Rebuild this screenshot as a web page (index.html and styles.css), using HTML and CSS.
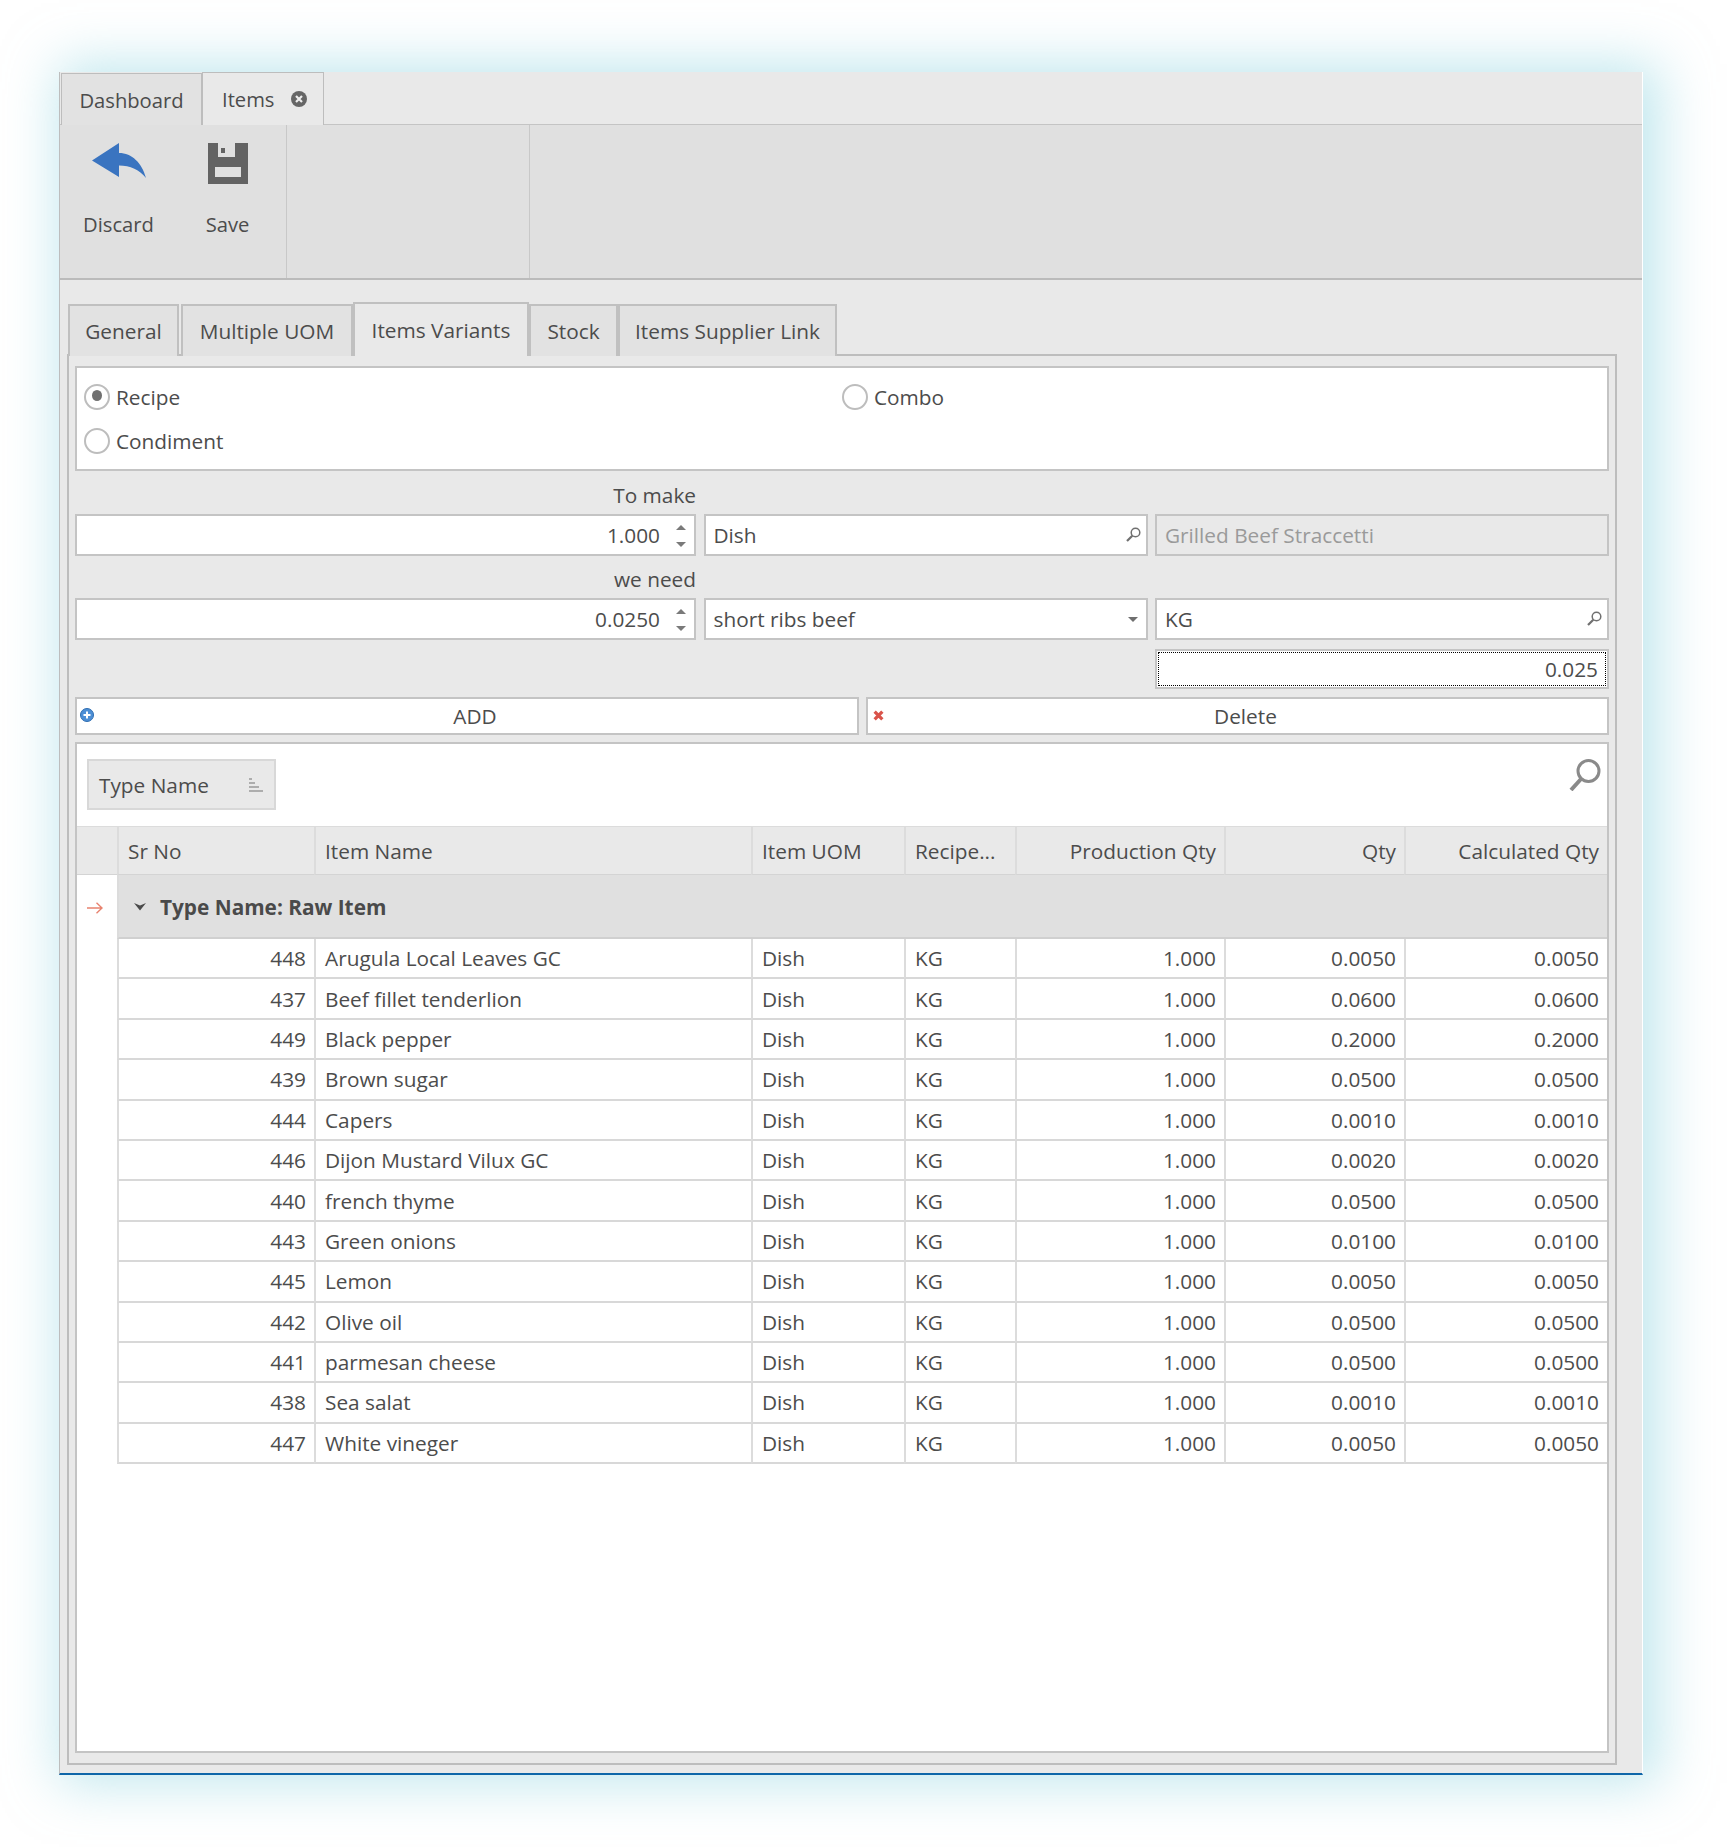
FILE: index.html
```html
<!DOCTYPE html>
<html lang="en">
<head>
<meta charset="utf-8">
<title>Items</title>
<link rel="stylesheet" href="styles.css">
</head>
<body>
<div class="window">
  <div class="doc-tabs">
    <div class="doc-tab">Dashboard</div>
    <div class="doc-tab active">Items
      <svg class="close-icon" viewBox="0 0 16 16"><circle cx="8" cy="8" r="8" fill="#666"/><path d="M5 5l6 6M11 5l-6 6" stroke="#eee" stroke-width="2.2" fill="none"/></svg>
    </div>
  </div>
  <div class="toolbar">
    <div class="tool-group first">
      <div class="tool">
        <svg class="tool-icon" width="54" height="41" viewBox="0 0 54 41"><path d="M0 17.500 27 0V10C40 10 50 20 54 35 48 27 38 22.500 27 22.500V34Z" fill="#3a74c0"/></svg>
        <span>Discard</span>
      </div>
      <div class="tool">
        <svg class="tool-icon" width="40" height="41" viewBox="0 0 40 41"><path fill-rule="evenodd" d="M0 0H40V41H0ZM10 0V14H27V0ZM13 5H17V10H13ZM7 24V34H33V24Z" fill="#636363"/></svg>
        <span>Save</span>
      </div>
    </div>
    <div class="tool-group second"></div>
  </div>
  <div class="content">
    <div class="tabs">
      <div class="tab t1">General</div>
      <div class="tab t2">Multiple UOM</div>
      <div class="tab t3 active">Items Variants</div>
      <div class="tab t4">Stock</div>
      <div class="tab t5">Items Supplier Link</div>
    </div>
    <div class="panel">
      <div class="radio-box">
        <label class="radio"><span class="dot on"></span>Recipe</label>
        <label class="radio"><span class="dot"></span>Combo</label>
        <label class="radio"><span class="dot"></span>Condiment</label>
      </div>
      <div class="form">
        <div class="caption">To make</div>
        <div></div><div></div>
        <div class="field num">1.000<span class="spin"><i class="up"></i><i class="down"></i></span></div>
        <div class="field">Dish
          <svg class="lens" viewBox="0 0 15 15"><circle cx="9.500" cy="5.500" r="4.300" fill="none" stroke="#707070" stroke-width="1.500"/><path d="M6.300 8.700 1 14" stroke="#707070" stroke-width="2.200"/></svg>
        </div>
        <div class="field off">Grilled Beef Straccetti</div>
        <div class="caption">we need</div>
        <div></div><div></div>
        <div class="field num">0.0250<span class="spin"><i class="up"></i><i class="down"></i></span></div>
        <div class="field">short ribs beef<i class="drop"></i></div>
        <div class="field">KG
          <svg class="lens" viewBox="0 0 15 15"><circle cx="9.500" cy="5.500" r="4.300" fill="none" stroke="#707070" stroke-width="1.500"/><path d="M6.300 8.700 1 14" stroke="#707070" stroke-width="2.200"/></svg>
        </div>
      </div>
      <div class="focus-row"><div class="field focus">0.025</div></div>
      <div class="actions">
        <div class="action add">
          <svg class="action-icon plus" viewBox="0 0 14 14"><circle cx="7" cy="7" r="6.500" fill="#4d8fd6" stroke="#2e6db0"/><path d="M7 3.500v7M3.500 7h7" stroke="#fff" stroke-width="2"/></svg>
          ADD
        </div>
        <div class="action del">
          <svg class="action-icon cross" viewBox="0 0 10 10"><path d="M1.500 1.500l7 7M8.500 1.500l-7 7" stroke="#d9534a" stroke-width="3"/></svg>
          Delete
        </div>
      </div>
      <div class="grid-box">
        <div class="group-panel">
          <div class="chip">Type Name
            <svg class="sort" viewBox="0 0 14 14"><path d="M0 1h3M0 5h6M0 9h10M0 13h14" stroke="#999" stroke-width="1.400"/></svg>
          </div>
          <svg class="find" viewBox="0 0 32 32"><circle cx="19.500" cy="12" r="10.500" fill="none" stroke="#8a8a8a" stroke-width="3"/><path d="M12 20 2 31" stroke="#8a8a8a" stroke-width="4"/></svg>
        </div>
        <div class="row head">
          <div class="cell ind"></div>
          <div class="cell">Sr No</div>
          <div class="cell">Item Name</div>
          <div class="cell">Item UOM</div>
          <div class="cell">Recipe...</div>
          <div class="cell r">Production Qty</div>
          <div class="cell r">Qty</div>
          <div class="cell r">Calculated Qty</div>
        </div>
        <div class="group-row">
          <div class="group-ind"><svg class="current" viewBox="0 0 16 12"><path d="M0 6H15M9.500 .8 15 6 9.500 11.200" fill="none" stroke="#e8836f" stroke-width="1.400"/></svg></div>
          <div class="group-title"><svg class="chev" viewBox="0 0 12 8"><path d="M0 0 6 2.500 12 0 6 7.500Z" fill="#4a4a4a"/></svg>Type Name: Raw Item</div>
        </div>
        <div class="row"><div class="ind"></div><div class="cell r">448</div><div class="cell">Arugula Local Leaves GC</div><div class="cell">Dish</div><div class="cell">KG</div><div class="cell r">1.000</div><div class="cell r">0.0050</div><div class="cell r">0.0050</div></div>
        <div class="row"><div class="ind"></div><div class="cell r">437</div><div class="cell">Beef fillet tenderlion</div><div class="cell">Dish</div><div class="cell">KG</div><div class="cell r">1.000</div><div class="cell r">0.0600</div><div class="cell r">0.0600</div></div>
        <div class="row"><div class="ind"></div><div class="cell r">449</div><div class="cell">Black pepper</div><div class="cell">Dish</div><div class="cell">KG</div><div class="cell r">1.000</div><div class="cell r">0.2000</div><div class="cell r">0.2000</div></div>
        <div class="row"><div class="ind"></div><div class="cell r">439</div><div class="cell">Brown sugar</div><div class="cell">Dish</div><div class="cell">KG</div><div class="cell r">1.000</div><div class="cell r">0.0500</div><div class="cell r">0.0500</div></div>
        <div class="row"><div class="ind"></div><div class="cell r">444</div><div class="cell">Capers</div><div class="cell">Dish</div><div class="cell">KG</div><div class="cell r">1.000</div><div class="cell r">0.0010</div><div class="cell r">0.0010</div></div>
        <div class="row"><div class="ind"></div><div class="cell r">446</div><div class="cell">Dijon Mustard Vilux GC</div><div class="cell">Dish</div><div class="cell">KG</div><div class="cell r">1.000</div><div class="cell r">0.0020</div><div class="cell r">0.0020</div></div>
        <div class="row"><div class="ind"></div><div class="cell r">440</div><div class="cell">french thyme</div><div class="cell">Dish</div><div class="cell">KG</div><div class="cell r">1.000</div><div class="cell r">0.0500</div><div class="cell r">0.0500</div></div>
        <div class="row"><div class="ind"></div><div class="cell r">443</div><div class="cell">Green onions</div><div class="cell">Dish</div><div class="cell">KG</div><div class="cell r">1.000</div><div class="cell r">0.0100</div><div class="cell r">0.0100</div></div>
        <div class="row"><div class="ind"></div><div class="cell r">445</div><div class="cell">Lemon</div><div class="cell">Dish</div><div class="cell">KG</div><div class="cell r">1.000</div><div class="cell r">0.0050</div><div class="cell r">0.0050</div></div>
        <div class="row"><div class="ind"></div><div class="cell r">442</div><div class="cell">Olive oil</div><div class="cell">Dish</div><div class="cell">KG</div><div class="cell r">1.000</div><div class="cell r">0.0500</div><div class="cell r">0.0500</div></div>
        <div class="row"><div class="ind"></div><div class="cell r">441</div><div class="cell">parmesan cheese</div><div class="cell">Dish</div><div class="cell">KG</div><div class="cell r">1.000</div><div class="cell r">0.0500</div><div class="cell r">0.0500</div></div>
        <div class="row"><div class="ind"></div><div class="cell r">438</div><div class="cell">Sea salat</div><div class="cell">Dish</div><div class="cell">KG</div><div class="cell r">1.000</div><div class="cell r">0.0010</div><div class="cell r">0.0010</div></div>
        <div class="row"><div class="ind"></div><div class="cell r">447</div><div class="cell">White vineger</div><div class="cell">Dish</div><div class="cell">KG</div><div class="cell r">1.000</div><div class="cell r">0.0050</div><div class="cell r">0.0050</div></div>
      </div>
    </div>
  </div>
</div>
</body>
</html>
```
FILE: styles.css
```css
* { box-sizing: border-box; }
html, body { margin: 0; background: #fff; }
body {
  height: 1847px;
  padding: 72px 0 0 59px;
  font-family: "Open Sans", "Noto Sans", sans-serif;
  font-size: 20.800px;
  color: #4c4c4c;
  overflow: hidden;
}
.window {
  width: 1584px;
  height: 1703px;
  background: #e9e9e9;
  border-left: 1px solid #bdbdbd;
  border-right: 1px solid #fff;
  border-bottom: 2px solid #0f66a8;
  box-shadow: 8px 0 50px 8px rgba(130, 208, 222, .5);
  display: flex;
  flex-direction: column;
}

/* document tabs */
.doc-tabs { height: 53px; display: flex; align-items: flex-end; border-bottom: 1px solid #c4c4c4; flex: none; padding-left: 1px; font-size: 20.200px; }
.doc-tab {
  height: 52px; width: 141px;
  display: flex; align-items: center; justify-content: center;
  background: #e2e2e2; border: 1px solid #bdbdbd; border-bottom: none;
  margin-bottom: -1px;
}
.doc-tab.active { width: 122px; height: 53px; background: #e9e9e9; justify-content: flex-start; padding-left: 19px; gap: 17px; position: relative; }
.close-icon { width: 16px; height: 16px; }

/* toolbar */
.toolbar { height: 155px; flex: none; display: flex; background: #e0e0e0; border-bottom: 2px solid #bbb; font-size: 20.200px; }
.tool-group { height: 100%; border-right: 1px solid #c8c8c8; display: flex; padding-left: 4px; }
.tool-group.first { width: 227px; }
.tool-group.second { width: 243px; }
.tool { width: 109px; display: flex; flex-direction: column; align-items: center; padding-top: 18px; }
.tool-icon { flex: none; }
.tool span { margin-top: 25px; line-height: 30px; }

/* content */
.content { flex: 1; display: flex; flex-direction: column; padding: 21px 0 8px 7px; min-height: 0; }
.tabs { height: 53px; display: flex; align-items: flex-end; padding-left: 1px; flex: none; }
.tab {
  height: 52px; display: flex; align-items: center; justify-content: center;
  background: #e2e2e2; border: 2px solid #c0c0c0; border-bottom: none;
  margin-bottom: -2px; position: relative;
}
.tab.t1 { width: 111px; margin-right: 2px; }
.tab.t2 { width: 172px; }
.tab.t3 { width: 176px; }
.tab.t4 { width: 89px; }
.tab.t5 { width: 219px; }
.tab.active { height: 54px; background: #e9e9e9; z-index: 1; }

.panel {
  width: 1550px; flex: 1; min-height: 0;
  border: 2px solid #bdbdbd;
  padding: 10px 6px 10px 6px;
  display: flex; flex-direction: column;
}
.radio-box {
  height: 105px; flex: none; background: #fff; border: 2px solid #c4c4c4;
  display: grid; grid-template-columns: 758px 1fr; grid-auto-rows: 44px;
  padding: 7px 0 0 7px; align-items: center;
}
.radio { display: flex; align-items: center; gap: 6px; }
.dot { width: 26px; height: 26px; border-radius: 50%; border: 2px solid #bdbdbd; background: #fff; position: relative; flex: none; }
.dot.on::after { content: ""; position: absolute; left: 6px; top: 4px; width: 10px; height: 11px; border-radius: 50%; background: #707070; }

.form { display: grid; grid-template-columns: 621px 444px 454px; column-gap: 7.500px; grid-template-rows: 43px 42px 42px 42px; flex: none; }
.caption { text-align: right; align-self: end; line-height: 30px; padding-bottom: 4px; }
.field {
  height: 42px; background: #fff; border: 2px solid #c4c4c4;
  display: flex; align-items: center; padding: 0 8px; position: relative;
}
.field.num { justify-content: flex-end; padding-right: 34px; }
.field.off { background: #e9e9e9; color: #9a9a9a; }
.spin { position: absolute; right: 8px; top: 9px; height: 22px; width: 10px; display: flex; flex-direction: column; justify-content: space-between; }
.spin i { display: block; width: 0; height: 0; border: 5px solid transparent; }
.spin .up { border-top: none; border-bottom-color: #7a7a7a; }
.spin .down { border-bottom: none; border-top-color: #7a7a7a; }
.drop { position: absolute; right: 8px; top: 17px; width: 0; height: 0; border: 5.500px solid transparent; border-bottom: none; border-top-color: #6f6f6f; }
.lens { position: absolute; right: 5px; top: 11px; width: 15px; height: 15px; }

.focus-row { display: flex; justify-content: flex-end; margin-top: 9px; flex: none; }
.field.focus { width: 454px; height: 40px; justify-content: flex-end; padding-right: 9px; outline: 1px dotted #000; outline-offset: -4px; }

.actions { display: flex; gap: 7px; margin-top: 8px; height: 38px; flex: none; }
.action { position: relative; height: 100%; background: #fff; border: 2px solid #c4c4c4; display: flex; align-items: center; justify-content: center; padding-left: 16px; }
.action.add { width: 784px; }
.action.del { flex: 1; }
.action-icon { position: absolute; }
.plus { left: 3px; top: 9px; width: 14px; height: 14px; }
.cross { left: 5px; top: 11px; width: 11px; height: 11px; }

.grid-box { margin-top: 7px; flex: 1; min-height: 0; background: #fff; border: 2px solid #c4c4c4; }
.group-panel { height: 82px; display: flex; justify-content: space-between; padding: 15px 6px 0 10px; }
.chip {
  width: 189px; height: 51px; background: #e9e9e9; border: 2px solid #d8d8d8;
  display: flex; align-items: center; justify-content: space-between; padding: 0 11px 0 10px;
}
.sort { width: 14px; height: 14px; }
.find { width: 32px; height: 32px; }

.row { display: grid; grid-template-columns: 40px 197px 437px 153px 111px 209px 180px 203px; height: 40.400px; }
.cell {
  display: flex; align-items: center; padding: 0 8px 0 9px;
  border-left: 2px solid #dcdcdc; border-bottom: 2px solid #d8d8d8;
  white-space: nowrap; overflow: hidden;
}
.cell.r { justify-content: flex-end; }
.ind { background: #fff; }
.row.head { height: 49px; background: #e9e9e9; border-top: 1px solid #dcdcdc; }
.row.head .cell { border-bottom: 1px solid #d4d4d4; }
.row.head .cell.ind { border-left: none; background: #e9e9e9; }
.group-row { display: flex; height: 64px; }
.group-ind { width: 40px; flex: none; display: flex; align-items: center; padding: 1px 0 0 10px; }
.current { width: 16px; height: 12px; }
.group-title {
  flex: 1; background: #e0e0e0; display: flex; align-items: center; gap: 14px;
  font-weight: 700; padding: 2px 0 0 15px; color: #4a4a4a; border-bottom: 2px solid #d0d0d0; border-left: 2px solid #dcdcdc;
}
.chev { width: 12px; height: 8px; }
```
